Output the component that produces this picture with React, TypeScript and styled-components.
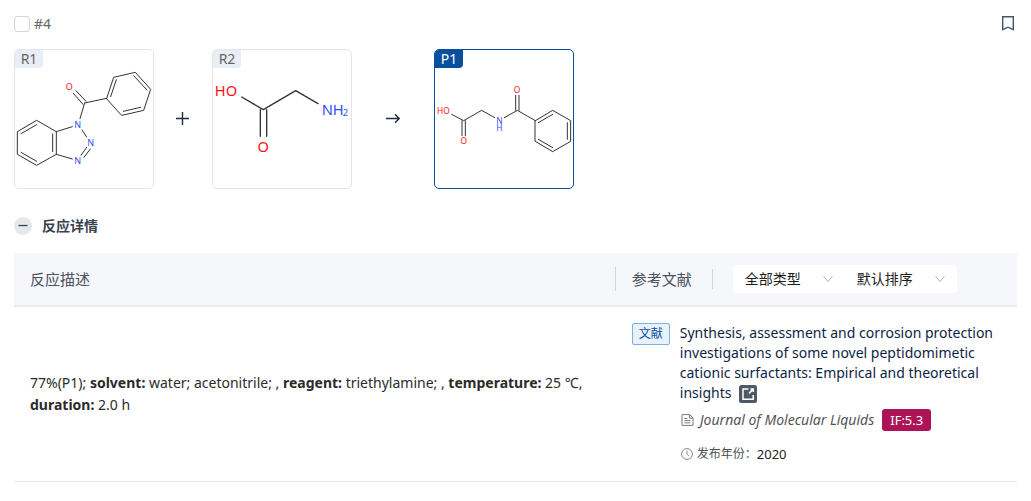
import React from "react";
import styled, { createGlobalStyle } from "styled-components";

const GlobalStyle = createGlobalStyle`
  *, *::before, *::after { box-sizing: border-box; }
  body {
    margin: 0;
    background: #fff;
    color: #252b3a;
    font: 14px/20px "Noto Sans", "Noto Sans CJK SC", sans-serif;
  }
`;

const Page = styled.main`
  padding: 12px 14px 16px;
`;

const TopBar = styled.header`
  display: flex;
  align-items: center;
  justify-content: space-between;
  height: 24px;
  padding-right: 2px;
`;

const PickLabel = styled.label`
  display: flex;
  align-items: center;
  gap: 4px;
  color: #666;
`;

const Checkbox = styled.input`
  appearance: none;
  width: 16px;
  height: 16px;
  margin: 0;
  border: 1px solid #d3d5d9;
  border-radius: 3px;
  background: #fff;
  &:checked { background: #0a4f9e; }
`;

const IconButton = styled.button`
  display: flex;
  padding: 0;
  border: 0;
  background: none;
  color: #4b5563;
  cursor: pointer;
`;

const Reaction = styled.section`
  display: flex;
  align-items: center;
  margin-top: 13px;
`;

const Card = styled.figure<{ $product?: boolean }>`
  position: relative;
  width: 140px;
  height: 140px;
  margin: 0;
  overflow: hidden;
  border: 1px solid ${(p) => (p.$product ? "#0a4f9e" : "#e4e5e8")};
  border-radius: 5px;
  svg { display: block; width: 100%; height: 100%; }
`;

const CardTag = styled.figcaption<{ $product?: boolean }>`
  position: absolute;
  top: 0;
  left: 0;
  width: 28px;
  height: 18px;
  border-bottom-right-radius: 4px;
  background: ${(p) => (p.$product ? "#0a4f9e" : "#e9edf5")};
  color: ${(p) => (p.$product ? "#fff" : "#666")};
  line-height: 18px;
  text-align: center;
`;

const Operator = styled.div<{ $wide?: boolean }>`
  display: flex;
  justify-content: center;
  width: ${(p) => (p.$wide ? "82px" : "58px")};
  color: #1f2a3d;
`;

const Bonds = styled.g<{ $weight?: number }>`
  fill: none;
  stroke: #333;
  stroke-width: ${(p) => p.$weight ?? 3};
  stroke-linecap: round;
  stroke-linejoin: round;
`;

const Atom = styled.text<{ $kind: "O" | "N"; $size: number }>`
  fill: ${(p) => (p.$kind === "O" ? "#ff1010" : "#304ff7")};
  font-family: "Noto Sans", sans-serif;
  font-size: ${(p) => p.$size}px;
  text-anchor: middle;
`;

const SectionHead = styled.div`
  display: flex;
  align-items: center;
  gap: 10px;
  margin: 27px 0 17px;
`;

const Collapse = styled.button`
  display: flex;
  align-items: center;
  justify-content: center;
  width: 18px;
  height: 18px;
  padding: 0;
  border: 0;
  border-radius: 50%;
  background: #e5e7eb;
  color: #3a4352;
`;

const SectionTitle = styled.h2`
  margin: 0;
  color: #3a4250;
  font-size: 14px;
  line-height: 20px;
  font-weight: 700;
`;

const Table = styled.table`
  width: 100%;
  border-collapse: separate;
  border-spacing: 0;
  table-layout: fixed;
`;

const HeadCell = styled.th<{ $main?: boolean }>`
  width: ${(p) => (p.$main ? "60%" : "40%")};
  height: 54px;
  padding: 0 0 0 16px;
  border-bottom: 2px solid #e9ebf0;
  background: #f5f7fb;
  color: #4b5260;
  font-size: 15px;
  font-weight: 400;
  text-align: left;
`;

const HeadRow = styled.div<{ $spread?: boolean }>`
  display: flex;
  align-items: center;
  justify-content: ${(p) => (p.$spread ? "space-between" : "flex-start")};
  gap: 20px;
`;

const Divider = styled.span<{ $tall?: boolean }>`
  width: 1px;
  height: ${(p) => (p.$tall ? 24 : 20)}px;
  background: #d0d4dc;
`;

const Filters = styled.div`
  display: flex;
  border-radius: 4px;
  background: #fff;
`;

const SelectBox = styled.div`
  display: grid;
  align-items: center;
  width: 112px;
  > * { grid-area: 1 / 1; }
  svg { justify-self: end; margin-right: 12px; pointer-events: none; }
`;

const Select = styled.select`
  appearance: none;
  width: 100%;
  height: 28px;
  padding: 0 24px 0 12px;
  border: 0;
  background: transparent;
  color: #1c1c1c;
  font: inherit;
  font-size: 14px;
`;

const Cell = styled.td`
  padding: 16px 16px 17px;
  border-bottom: 1px solid #e8e9ec;
  vertical-align: middle;
`;

const Description = styled.p`
  margin: 0;
  color: #2b2b2b;
  line-height: 22px;
`;

const Reference = styled.article`
  display: flex;
  align-items: flex-start;
  gap: 10px;
`;

const KindTag = styled.span`
  flex: none;
  width: 38px;
  height: 22px;
  border: 1px solid #7fb0e4;
  border-radius: 2px;
  background: #e8f2fd;
  color: #0a4f9e;
  font-size: 12px;
  line-height: 20px;
  text-align: center;
`;

const RefBody = styled.div`
  display: flex;
  flex-direction: column;
`;

const RefTitle = styled.a`
  color: #0e1f45;
  text-decoration: none;
  svg { margin-left: 4px; vertical-align: -5px; }
`;

const RefHeading = styled.h3`
  max-width: 320px;
  margin: 0;
  font-size: 14px;
  line-height: 20px;
  font-weight: 400;
`;

const Journal = styled.div`
  display: flex;
  align-items: center;
  margin-top: 6px;
  gap: 6px;
  color: #555;
  svg { flex: none; margin-left: 1px; }
`;

const Impact = styled.span`
  height: 22px;
  margin-left: 2px;
  padding: 0 8px;
  border-radius: 3px;
  background: #ad1457;
  color: #fff;
  font-size: 13px;
  line-height: 22px;
`;

const Year = styled.div`
  display: flex;
  align-items: center;
  margin-top: 13px;
  font-size: 12px;
  color: #4f4f4f;
  svg { flex: none; margin: 0 4px 0 1px; }
  time { color: #222; font-size: 13px; }
`;

const ChevronDown = () => (
  <svg width="10" height="8" viewBox="0 0 10 8" fill="none" stroke="#b4b4b4">
    <path d="M.5 1 5 6.8 9.5 1" />
  </svg>
);

const BookmarkIcon = () => (
  <svg width="14" height="18" viewBox="0 0 14 18" fill="none" stroke="currentColor" strokeWidth="1.4">
    <path d="M1.7 1.7h10.6v13L7 12.2l-5.3 2.5z" />
  </svg>
);

const ReactantOne = () => (
  <svg viewBox="45 150 414 414" aria-hidden="true">
    <Bonds>
      <path d="M320 295 341 232 406 217 452 268 431 331 366 346ZM332 290 349 239M401 227 441 270M422 322 370 334" />
      <path d="M320 295 254 309M249 313 220 280M258 304 228 272M254 309 240 356" />
      <path d="M217 380 169 395 110 361 52 395V463L110 496 169 463 217 477M169 395V463M158 402V455M110 374 63 401M63 457 110 484" />
      <path d="M246 390 260 411M260 442 243 466M271 447 252 472" />
    </Bonds>
    <Atom $kind="O" $size={27} x="208" y="270">O</Atom>
    <Atom $kind="N" $size={27} x="233" y="385">N</Atom>
    <Atom $kind="N" $size={27} x="272" y="439">N</Atom>
    <Atom $kind="N" $size={27} x="233" y="493">N</Atom>
  </svg>
);

const ReactantTwo = () => (
  <svg viewBox="144 30 414 414" aria-hidden="true">
    <Bonds $weight={4}>
      <path d="M230 171 295 209 392 152 459 191M286 209V289M305 209V289" />
    </Bonds>
    <Atom $kind="O" $size={44} x="183" y="169">HO</Atom>
    <Atom $kind="O" $size={44} x="295" y="337">O</Atom>
    <Atom $kind="N" $size={44} x="503" y="225">NH</Atom>
    <Atom $kind="N" $size={28} x="541" y="227">2</Atom>
  </svg>
);

const ProductOne = () => (
  <svg viewBox="195 30 414 414" aria-hidden="true">
    <Bonds>
      <path d="M245 223 281 242 335 211 374 233M276 242V287M286 242V287M403 233 442 211 496 242M437 211V166M447 211V166" />
      <path d="M496 242 548 211 602 242V304L548 335 496 304ZM505 248 548 223M592 248V298M548 323 505 298" />
    </Bonds>
    <Atom $kind="O" $size={25} x="220" y="221">HO</Atom>
    <Atom $kind="O" $size={25} x="281" y="313">O</Atom>
    <Atom $kind="O" $size={25} x="441" y="159">O</Atom>
    <Atom $kind="N" $size={25} y="251">
      <tspan x="388">N</tspan>
      <tspan x="388" dy="21">H</tspan>
    </Atom>
  </svg>
);

export default function App() {
  return (
    <>
      <GlobalStyle />
      <Page>
        <TopBar>
          <PickLabel>
            <Checkbox type="checkbox" />
            #4
          </PickLabel>
          <IconButton aria-label="收藏">
            <BookmarkIcon />
          </IconButton>
        </TopBar>

        <Reaction>
          <Card>
            <ReactantOne />
            <CardTag>R1</CardTag>
          </Card>
          <Operator>
            <svg width="14" height="14" viewBox="0 0 14 14" stroke="currentColor" strokeWidth="1.4">
              <path d="M6.5 0v13M0 6.5h13" />
            </svg>
          </Operator>
          <Card>
            <ReactantTwo />
            <CardTag>R2</CardTag>
          </Card>
          <Operator $wide>
            <svg width="14" height="12" viewBox="0 0 14 12" fill="none" stroke="currentColor" strokeWidth="1.4">
              <path d="M0 5.5h13M9 1.3 13.2 5.5 9 9.7" />
            </svg>
          </Operator>
          <Card $product>
            <ProductOne />
            <CardTag $product>P1</CardTag>
          </Card>
        </Reaction>

        <SectionHead>
          <Collapse aria-label="收起">
            <svg width="10" height="10" viewBox="0 0 10 10" stroke="currentColor" strokeWidth="1.3">
              <path d="M.5 4.5h9" />
            </svg>
          </Collapse>
          <SectionTitle>反应详情</SectionTitle>
        </SectionHead>

        <Table>
          <thead>
            <tr>
              <HeadCell $main>
                <HeadRow $spread>
                  反应描述
                  <Divider $tall />
                </HeadRow>
              </HeadCell>
              <HeadCell>
                <HeadRow>
                  参考文献
                  <Divider />
                  <Filters>
                    <SelectBox>
                      <Select aria-label="类型">
                        <option>全部类型</option>
                      </Select>
                      <ChevronDown />
                    </SelectBox>
                    <SelectBox>
                      <Select aria-label="排序">
                        <option>默认排序</option>
                      </Select>
                      <ChevronDown />
                    </SelectBox>
                  </Filters>
                </HeadRow>
              </HeadCell>
            </tr>
          </thead>
          <tbody>
            <tr>
              <Cell>
                <Description>
                  77%(P1); <b>solvent:</b> water; acetonitrile; , <b>reagent:</b> triethylamine; ,{" "}
                  <b>temperature:</b> 25 ℃, <b>duration:</b> 2.0 h
                </Description>
              </Cell>
              <Cell>
                <Reference>
                  <KindTag>文献</KindTag>
                  <RefBody>
                    <RefHeading>
                      <RefTitle href="#">
                        Synthesis, assessment and corrosion protection investigations of some novel
                        peptidomimetic cationic surfactants: Empirical and theoretical insights{" "}
                        <svg width="18" height="18" viewBox="0 0 18 18" fill="none">
                          <rect width="18" height="18" rx="2.5" fill="#4f5866" />
                          <path d="M9.5 4H4v10.2h10.2V10" stroke="#fff" strokeWidth="1.5" />
                          <path d="M11.5 4h2.8v3M14 4.4 10 8.4" stroke="#fff" strokeWidth="1.5" />
                        </svg>
                      </RefTitle>
                    </RefHeading>
                    <Journal>
                      <svg width="13" height="12" viewBox="0 0 13 12" fill="none" stroke="#777">
                        <path d="M1 .6h7.6L12 3.8v7.6H1zM8.4.8v3.4H12M3.4 4.5h3M3.4 6.6h6M3.4 8.8h6" />
                      </svg>
                      <cite>Journal of Molecular Liquids</cite>
                      <Impact>IF:5.3</Impact>
                    </Journal>
                    <Year>
                      <svg width="12" height="12" viewBox="0 0 12 12" fill="none" stroke="#888">
                        <circle cx="6" cy="6" r="5.4" />
                        <path d="M6 2.6V6.2L8 8.2" />
                      </svg>
                      发布年份：<time>2020</time>
                    </Year>
                  </RefBody>
                </Reference>
              </Cell>
            </tr>
          </tbody>
        </Table>
      </Page>
    </>
  );
}
